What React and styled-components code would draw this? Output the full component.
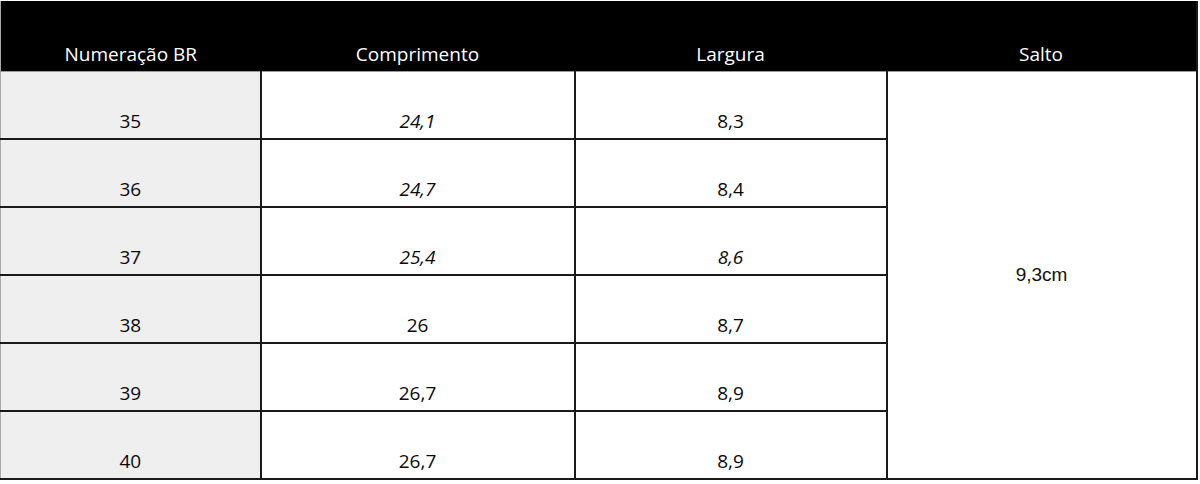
import React from "react";
import styled, { createGlobalStyle } from "styled-components";

const Global = createGlobalStyle`
  html, body { margin: 0; padding: 0; background: #ffffff; }
  body { font-family: "Open Sans", "Lato", sans-serif; }
`;

const Page = styled.div`
  padding-top: 1px;
  width: 1200px;
  height: 484px;
  box-sizing: border-box;
  overflow: hidden;
`;

const Table = styled.table`
  border-collapse: collapse;
  table-layout: fixed;
  width: 1197px;
  border-left: 1px solid #a8a8a8;
`;

const HeadCell = styled.th`
  background: #000000;
  color: #ffffff;
  font-family: "Open Sans", sans-serif;
  font-weight: 400;
  font-size: 19px;
  line-height: 26px;
  height: 70px;
  padding: 0 0 4px 0;
  box-sizing: border-box;
  vertical-align: bottom;
  text-align: center;
  border-bottom: 1px solid #9a9a9a;
  border-right: ${(p) => (p.$last ? "2px solid #1a1a1a" : "none")};
`;

const Cell = styled.td`
  background: ${(p) => (p.$shade ? "#efefef" : "#ffffff")};
  color: #0a0a0a;
  font-family: "Open Sans", sans-serif;
  font-style: ${(p) => (p.$italic ? "italic" : "normal")};
  font-size: 19px;
  line-height: 26px;
  height: 68px;
  padding: 0 0 4px 0;
  box-sizing: border-box;
  vertical-align: bottom;
  text-align: center;
  border-bottom: 2px solid #1a1a1a;
  border-right: 2px solid #1a1a1a;
`;

const MergedCell = styled.td`
  background: #ffffff;
  color: #111111;
  font-family: "Liberation Sans", Arial, sans-serif;
  font-size: 19px;
  text-align: center;
  vertical-align: middle;
  padding: 0;
  border-bottom: 2px solid #1a1a1a;
  border-right: 2px solid #1a1a1a;
`;

const rows = [
  { n: "35", c: "24,1", ci: true, l: "8,3" },
  { n: "36", c: "24,7", ci: true, l: "8,4" },
  { n: "37", c: "25,4", ci: true, l: "8,6", li: true },
  { n: "38", c: "26", l: "8,7" },
  { n: "39", c: "26,7", l: "8,9" },
  { n: "40", c: "26,7", l: "8,9" },
];

export default function App() {
  return (
    <>
      <Global />
      <Page>
        <Table>
          <colgroup>
            <col style={{ width: 260 }} />
            <col style={{ width: 314 }} />
            <col style={{ width: 312 }} />
            <col style={{ width: 310 }} />
          </colgroup>
          <thead>
            <tr>
              <HeadCell>Numeração BR</HeadCell>
              <HeadCell>Comprimento</HeadCell>
              <HeadCell>Largura</HeadCell>
              <HeadCell $last>Salto</HeadCell>
            </tr>
          </thead>
          <tbody>
            {rows.map((r, i) => (
              <tr key={r.n}>
                <Cell $shade>{r.n}</Cell>
                <Cell $italic={r.ci}>{r.c}</Cell>
                <Cell $italic={r.li}>{r.l}</Cell>
                {i === 0 && <MergedCell rowSpan={6}>9,3cm</MergedCell>}
              </tr>
            ))}
          </tbody>
        </Table>
      </Page>
    </>
  );
}
